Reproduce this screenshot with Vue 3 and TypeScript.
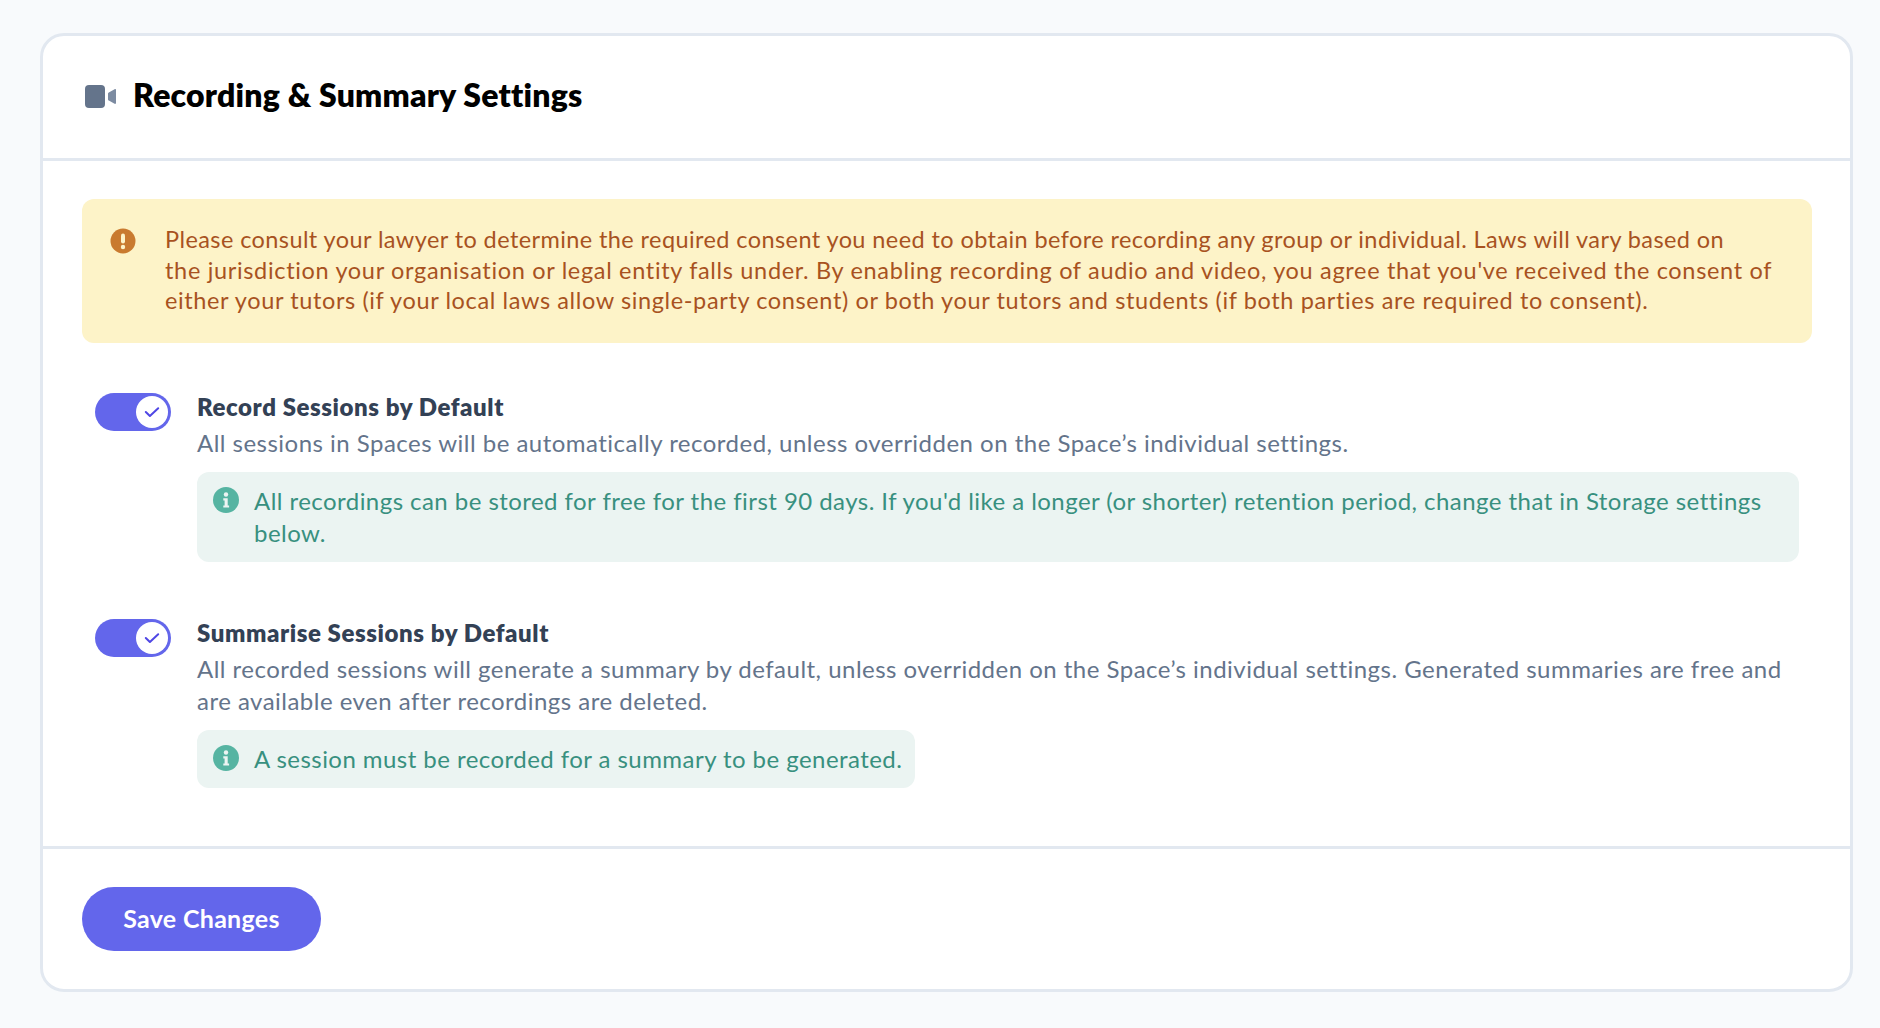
<script setup lang="ts">
const sections = [
  {
    title: 'Record Sessions by Default',
    desc: 'All sessions in Spaces will be automatically recorded, unless overridden on the Space’s individual settings.',
    info: "All recordings can be stored for free for the first 90 days. If you'd like a longer (or shorter) retention period, change that in Storage settings below.",
    inline: false,
  },
  {
    title: 'Summarise Sessions by Default',
    desc: 'All recorded sessions will generate a summary by default, unless overridden on the Space’s individual settings. Generated summaries are free and are available even after recordings are deleted.',
    info: 'A session must be recorded for a summary to be generated.',
    inline: true,
  },
]
</script>

<template>
  <div class="page">
    <div class="card">
      <header class="head">
        <svg class="cam" width="32" height="24" viewBox="0 0 32 24">
          <rect x="0" y="0" width="20" height="23" rx="4" fill="#64748b" />
          <path d="M23.8 7.4 29.6 4.2c.7-.4 1.4.1 1.4.8v13c0 .7-.7 1.2-1.4.8l-5.8-3.2c-.5-.3-.8-.7-.8-1.2V8.6c0-.5.3-.9.8-1.2z" fill="#7c8ba1" />
        </svg>
        <h1>Recording &amp; Summary Settings</h1>
      </header>
      <div class="body">
        <div class="alert">
          <svg class="alert-ico" width="26" height="26" viewBox="0 0 26 26">
            <circle cx="13" cy="13" r="12.5" fill="#c97a2f" />
            <rect x="11" y="5.5" width="4" height="10" rx="2" fill="#fdf3c8" />
            <circle cx="13" cy="19" r="2.2" fill="#fdf3c8" />
          </svg>
          <p>
            <span class="line first">Please consult your lawyer to determine the required consent you need to obtain before recording any group or individual. Laws will vary based on</span>
            <span class="line second">the jurisdiction your organisation or legal entity falls under. By enabling recording of audio and video, you agree that you've received the consent of</span>
            <span class="line third">either your tutors (if your local laws allow single-party consent) or both your tutors and students (if both parties are required to consent).</span>
          </p>
        </div>
        <section v-for="s in sections" :key="s.title" class="row">
          <div class="toggle">
            <span class="knob">
              <svg width="16" height="16" viewBox="0 0 16 16"><path d="M1.8 8 5.9 12 14.2 4.2" fill="none" stroke="#4f46e5" stroke-width="2" stroke-linecap="round" stroke-linejoin="round" /></svg>
            </span>
          </div>
          <div class="content">
            <h2>{{ s.title }}</h2>
            <p class="desc">{{ s.desc }}</p>
            <div class="info" :class="{ inline: s.inline }">
              <svg class="info-ico" width="26" height="26" viewBox="0 0 26 26">
                <circle cx="13" cy="13" r="13" fill="#56b4a2" />
                <circle cx="13" cy="7.5" r="2.2" fill="#ecf4f2" />
                <path d="M10.3 11.3h4.4v7.2h1.4v2.1h-5.8v-2.1h1.3v-5.1h-1.3z" fill="#ecf4f2" />
              </svg>
              <p>{{ s.info }}</p>
            </div>
          </div>
        </section>
      </div>
      <footer class="foot">
        <button class="save" type="button">Save Changes</button>
      </footer>
    </div>
  </div>
</template>

<style>
html, body { margin: 0; background: #f8fafc; }
</style>

<style scoped>
.page {
  box-sizing: border-box;
  height: 1028px;
  padding: 33px 27px 36px 40px;
  background: #f8fafc;
  font-family: "Lato", "Noto Sans", sans-serif;
}
.card {
  box-sizing: border-box;
  height: 959px;
  background: #fff;
  border: 3px solid #e2e8f0;
  border-radius: 24px;
  display: flex;
  flex-direction: column;
}
.head {
  height: 125px;
  box-sizing: border-box;
  display: flex;
  align-items: center;
  padding: 0 0 5px 42px;
  gap: 16px;
  border-bottom: 3px solid #e2e8f0;
  flex: none;
}
.cam { flex: none; margin-top: 4px; }
h1 {
  margin: 0;
  font-size: 32px;
  letter-spacing: 0.2px;
  font-weight: 800;
  color: #000;
}
.body {
  flex: 1;
  padding: 38px 38px 0 39px;
}
.alert {
  height: 144px;
  box-sizing: border-box;
  background: #fdf3c8;
  border-radius: 12px;
  padding: 25px 30px 0 28px;
  display: flex;
  gap: 29px;
}
.alert-ico { flex: none; margin-top: 4px; }
.alert p {
  margin: 0;
  font-size: 23.5px;
  line-height: 30.6px;
  color: #a8521f;
}
.line { display: block; white-space: nowrap; }
.line.first { letter-spacing: 0.41px; }
.line.second { letter-spacing: 0.67px; }
.line.third { letter-spacing: 0.62px; }
.row {
  display: flex;
  padding: 0 13px;
  gap: 26px;
  margin-top: 50px;
}
.row + .row { margin-top: 57px; }
.toggle {
  flex: none;
  width: 76px;
  height: 38px;
  box-sizing: border-box;
  border-radius: 19px;
  background: #6366eb;
  display: flex;
  justify-content: flex-end;
  align-items: center;
  padding-right: 3px;
}
.knob {
  width: 32px;
  height: 32px;
  border-radius: 50%;
  background: #fff;
  display: flex;
  align-items: center;
  justify-content: center;
}
.content { flex: 1; min-width: 0; }
h2 {
  margin: 0;
  font-size: 24px;
  letter-spacing: 0.58px;
  line-height: 28px;
  font-weight: 800;
  color: #334155;
}
.desc {
  margin: 6px 0 0;
  font-size: 24px;
  letter-spacing: 0.48px;
  line-height: 32px;
  color: #64748b;
}
.info {
  margin-top: 13px;
  box-sizing: border-box;
  background: #ebf4f2;
  border-radius: 12px;
  padding: 13px 13px 13px 16px;
  display: flex;
  gap: 15px;
}
.info.inline { display: inline-flex; }
.info-ico { flex: none; margin-top: 2px; }
.info p {
  margin: 0;
  font-size: 24px;
  letter-spacing: 0.45px;
  line-height: 32px;
  color: #38907f;
}
.foot {
  flex: none;
  height: 143px;
  box-sizing: border-box;
  border-top: 3px solid #e2e8f0;
  padding: 38px 0 0 39px;
}
.save {
  width: 239px;
  height: 64px;
  border: 0;
  border-radius: 32px;
  padding: 0 0 2px;
  background: #6366eb;
  color: #fff;
  font: 700 25px "Lato", sans-serif;
  letter-spacing: 0.3px;
}
</style>
